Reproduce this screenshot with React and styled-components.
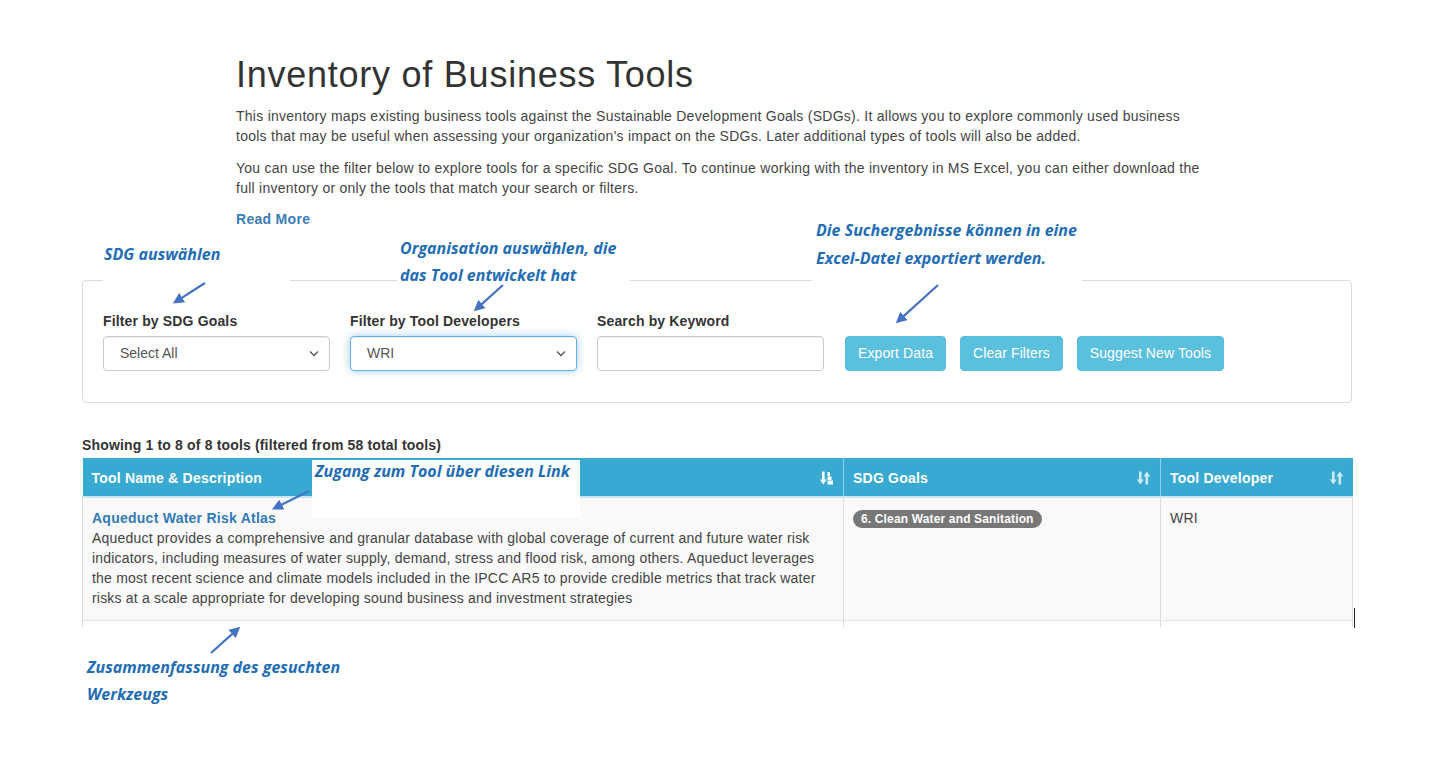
import React from "react";
import styled, { createGlobalStyle } from "styled-components";

const GlobalStyle = createGlobalStyle`
  html, body { margin: 0; padding: 0; background: #fff; }
  body {
    font-family: "Liberation Sans", Arial, Helvetica, sans-serif;
    font-size: 14px;
    line-height: 20px;
    color: #333;
  }
  * { box-sizing: border-box; }
`;

const Page = styled.div`
  position: relative;
  width: 1440px;
  height: 760px;
  padding: 0 0 0 82px;
  overflow: hidden;
`;

const Intro = styled.section`
  margin-left: 154px;
  width: 970px;
`;

const Title = styled.h1`
  margin: 55px 0 11px;
  font-size: 36px;
  line-height: 39.6px;
  font-weight: 400;
  color: #333;
  letter-spacing: 0.75px;
`;

const Para = styled.p`
  margin: 0 0 12px;
  color: #444;
  letter-spacing: 0.26px;
`;

const ReadMore = styled.a`
  display: block;
  margin-top: -1px;
  font-weight: 700;
  color: #3a7bb6;
  text-decoration: none;
  letter-spacing: 0.3px;
`;

const FilterPanel = styled.div`
  margin-top: 51px;
  width: 1270px;
  border: 1px solid #dcdcdc;
  border-radius: 4px;
  padding: 30px 20px 31px;
  display: flex;
  align-items: flex-end;
  gap: 20px;
`;

const FormGroup = styled.div`
  display: flex;
  flex-direction: column;
  width: 227px;
`;

const Label = styled.label`
  font-weight: 700;
  color: #333;
  margin-bottom: 5px;
  letter-spacing: 0.15px;
`;

const SelectBox = styled.div`
  height: 35px;
  border: 1px solid ${(p) => (p.$focused ? "#66afe9" : "#ccc")};
  border-radius: 4px;
  padding: 0 10px 0 16px;
  display: flex;
  align-items: center;
  justify-content: space-between;
  color: #555;
  font-size: 14px;
  background: #fff;
  box-shadow: ${(p) =>
    p.$focused
      ? "inset 0 1px 1px rgba(0,0,0,.075), 0 0 8px rgba(102,175,233,.6)"
      : "inset 0 1px 1px rgba(0,0,0,.075)"};
`;

const TextInput = styled.div`
  height: 35px;
  border: 1px solid #ccc;
  border-radius: 4px;
  background: #fff;
  box-shadow: inset 0 1px 1px rgba(0,0,0,.075);
`;

const Buttons = styled.div`
  display: flex;
  gap: 14px;
  margin-left: 1px;
  height: 35px;
`;

const InfoButton = styled.button`
  height: 35px;
  padding: 0 12px;
  border: 1px solid #56bddc;
  border-radius: 4px;
  background: #5bc0de;
  color: #fff;
  font-family: "Liberation Sans", Arial, sans-serif;
  font-size: 14px;
  letter-spacing: 0.1px;
`;

const Summary = styled.div`
  margin: 32px 0 3px;
  font-weight: 700;
  color: #333;
  letter-spacing: 0.16px;
`;

const Table = styled.table`
  width: 1270px;
  border-collapse: collapse;
  table-layout: fixed;
`;

const HeadCell = styled.th`
  width: ${(p) => p.$w}px;
  background: #38a9d0;
  color: #fff;
  text-align: left;
  font-weight: 700;
  padding: 10px 10px 8px 9px;
  border-left: 1px solid #8ccfe6;
  border-bottom: 2px solid #c6e8f3;
  letter-spacing: 0.22px;
  &:first-child { border-left: none; }
`;

const HeadInner = styled.div`
  display: flex;
  align-items: center;
  justify-content: space-between;
`;

const BodyRow = styled.tr`
  background: ${(p) => (p.$stripe ? "#f9f9f9" : "#fff")};
`;

const Cell = styled.td`
  vertical-align: top;
  padding: ${(p) => (p.$stub ? "0" : "10px 10px 12px 9px")};
  height: ${(p) => (p.$stub ? "7px" : "auto")};
  border-left: 1px solid #ddd;
  border-right: 1px solid #ddd;
  border-top: 1px solid #e4e4e4;
  color: #444;
  letter-spacing: 0.2px;
`;

const ToolLink = styled.a`
  display: block;
  font-weight: 700;
  color: #337ab7;
  text-decoration: none;
  letter-spacing: 0.25px;
`;

const Badge = styled.span`
  display: inline-block;
  margin-top: 1px;
  padding: 3px 8px;
  font-size: 12px;
  font-weight: 700;
  line-height: 1;
  color: #fff;
  background: #777;
  border-radius: 10px;
  letter-spacing: 0.15px;
`;

const Note = styled.div`
  position: absolute;
  left: ${(p) => p.$x}px;
  top: ${(p) => p.$y}px;
  width: ${(p) => p.$w}px;
  height: ${(p) => p.$h}px;
  padding: ${(p) => p.$pad || "0"};
  background: ${(p) => (p.$plain ? "transparent" : "#fff")};
  font-family: "Open Sans", "Noto Sans", sans-serif;
  font-style: italic;
  font-weight: 700;
  font-size: 16px;
  line-height: ${(p) => p.$lh || 27}px;
  color: #1f6db5;
  letter-spacing: 0;
  white-space: nowrap;
`;

const Arrows = styled.svg`
  position: absolute;
  left: 0;
  top: 0;
  pointer-events: none;
`;

const Cursor = styled.div`
  position: absolute;
  left: 1354px;
  top: 608px;
  width: 1px;
  height: 20px;
  background: #222;
`;

const Chevron = () => (
  <svg width="10" height="7" viewBox="0 0 10 7">
    <polyline points="1,1.5 5,5.5 9,1.5" fill="none" stroke="#555" strokeWidth="1.3" />
  </svg>
);

const SortBoth = () => (
  <svg width="13" height="14" viewBox="0 0 13 14" style={{ opacity: 0.75 }}>
    <rect x="2" y="0.5" width="2.6" height="9" fill="#fff" />
    <polygon points="-0.2,8.5 6.8,8.5 3.3,13.5" fill="#fff" />
    <rect x="8.5" y="4.5" width="2.6" height="9" fill="#fff" />
    <polygon points="6.3,5.5 13.3,5.5 9.8,0.5" fill="#fff" />
  </svg>
);

const SortAttr = () => (
  <svg width="13" height="14" viewBox="0 0 13 14">
    <rect x="2" y="0.5" width="2.6" height="9" fill="#fff" />
    <polygon points="-0.2,8.5 6.8,8.5 3.3,13.5" fill="#fff" />
    <rect x="7.5" y="1" width="2.5" height="4" fill="#fff" />
    <rect x="7.5" y="5.5" width="4" height="3.5" fill="#fff" />
    <rect x="7.5" y="9.5" width="5.5" height="4" fill="#fff" />
  </svg>
);

const arrowList = [
  [205, 283, 172, 304],
  [503, 285, 473, 312],
  [938, 285, 895, 324],
  [309, 491, 271, 510],
  [211, 653, 241, 626],
];

const ArrowLayer = () => (
  <Arrows width="1440" height="760">
    <defs>
      <marker id="ah" markerWidth="5" markerHeight="5" refX="3.2" refY="2.5" orient="auto" markerUnits="strokeWidth">
        <polygon points="0,0 5,2.5 0,5" fill="#4472c4" />
      </marker>
    </defs>
    {arrowList.map(([x1, y1, x2, y2], i) => {
      const dx = x2 - x1;
      const dy = y2 - y1;
      const len = Math.hypot(dx, dy);
      const ex = x2 - (dx / len) * 5;
      const ey = y2 - (dy / len) * 5;
      return (
        <line key={i} x1={x1} y1={y1} x2={ex} y2={ey} stroke="#4472c4" strokeWidth="2.2" markerEnd="url(#ah)" />
      );
    })}
  </Arrows>
);

export default function App() {
  return (
    <>
      <GlobalStyle />
      <Page>
        <Intro>
          <Title>Inventory of Business Tools</Title>
          <Para>
            This inventory maps existing business tools against the Sustainable Development Goals (SDGs). It allows you to explore commonly used business tools that may be useful when assessing your organization’s impact on the SDGs. Later additional types of tools will also be added.
          </Para>
          <Para>
            You can use the filter below to explore tools for a specific SDG Goal. To continue working with the inventory in MS Excel, you can either download the full inventory or only the tools that match your search or filters.
          </Para>
          <ReadMore href="#">Read More</ReadMore>
        </Intro>

        <FilterPanel>
          <FormGroup>
            <Label>Filter by SDG Goals</Label>
            <SelectBox>
              Select All
              <Chevron />
            </SelectBox>
          </FormGroup>
          <FormGroup>
            <Label>Filter by Tool Developers</Label>
            <SelectBox $focused>
              WRI
              <Chevron />
            </SelectBox>
          </FormGroup>
          <FormGroup>
            <Label>Search by Keyword</Label>
            <TextInput />
          </FormGroup>
          <Buttons>
            <InfoButton>Export Data</InfoButton>
            <InfoButton>Clear Filters</InfoButton>
            <InfoButton>Suggest New Tools</InfoButton>
          </Buttons>
        </FilterPanel>

        <Summary>Showing 1 to 8 of 8 tools (filtered from 58 total tools)</Summary>

        <Table>
          <thead>
            <tr>
              <HeadCell $w={761}>
                <HeadInner>
                  Tool Name &amp; Description
                  <SortAttr />
                </HeadInner>
              </HeadCell>
              <HeadCell $w={317}>
                <HeadInner>
                  SDG Goals
                  <SortBoth />
                </HeadInner>
              </HeadCell>
              <HeadCell $w={192}>
                <HeadInner>
                  Tool Developer
                  <SortBoth />
                </HeadInner>
              </HeadCell>
            </tr>
          </thead>
          <tbody>
            <BodyRow $stripe>
              <Cell>
                <ToolLink href="#">Aqueduct Water Risk Atlas</ToolLink>
                Aqueduct provides a comprehensive and granular database with global coverage of current and future water risk indicators, including measures of water supply, demand, stress and flood risk, among others. Aqueduct leverages the most recent science and climate models included in the IPCC AR5 to provide credible metrics that track water risks at a scale appropriate for developing sound business and investment strategies
              </Cell>
              <Cell>
                <Badge>6. Clean Water and Sanitation</Badge>
              </Cell>
              <Cell>WRI</Cell>
            </BodyRow>
            <BodyRow>
              <Cell $stub />
              <Cell $stub />
              <Cell $stub />
            </BodyRow>
          </tbody>
        </Table>

        <Note $x={103} $y={240} $w={187} $h={46} $pad="1px 0 0 1px">SDG auswählen</Note>
        <Note $x={397} $y={234} $w={233} $h={52} $pad="1px 0 0 3px">
          Organisation auswählen, die
          <br />
          das Tool entwickelt hat
        </Note>
        <Note $x={812} $y={216} $w={270} $h={70} $pad="0 0 0 4px" $lh={28}>
          Die Suchergebnisse können in eine
          <br />
          Excel-Datei exportiert werden.
        </Note>
        <Note $x={312} $y={460} $w={268} $h={57} $pad="0 0 0 3px" $lh={22}>
          Zugang zum Tool über diesen Link
        </Note>
        <Note $plain $x={86} $y={654} $w={300} $h={56} $pad="0 0 0 1px">
          Zusammenfassung des gesuchten
          <br />
          Werkzeugs
        </Note>
        <ArrowLayer />
        <Cursor />
      </Page>
    </>
  );
}
